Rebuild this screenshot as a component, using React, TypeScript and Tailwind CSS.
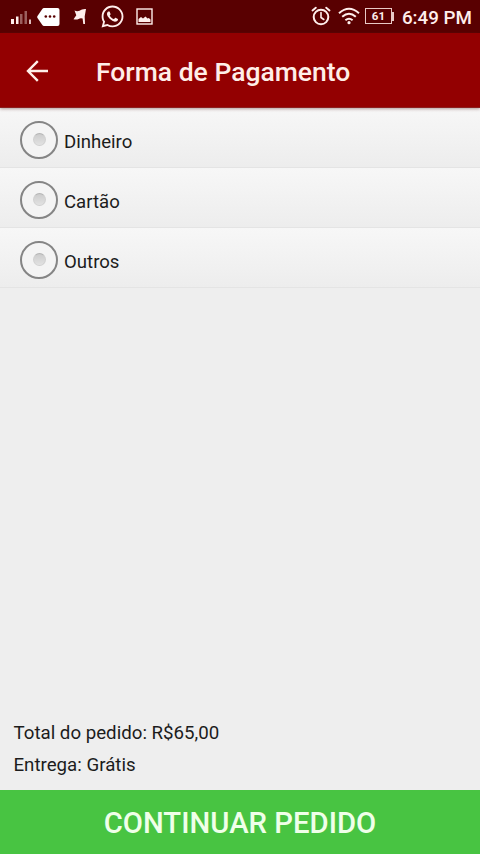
import { FaWhatsapp } from "react-icons/fa";

const paymentMethods = ["Dinheiro", "Cartão", "Outros"];

function StatusBar() {
  return (
    <div className="flex h-[33px] items-center justify-between bg-[#590001] pl-[11px] pr-[8px] text-[#ffeeec]">
      <div className="flex items-center">
        <svg width="21" height="14" viewBox="0 0 21 14" fill="currentColor">
          <rect x="0" y="9" width="3" height="5" />
          <rect x="5" y="6.5" width="2.500" height="7.500" />
          <rect x="9" y="4" width="2.500" height="10" opacity="0.4" />
          <rect x="13.500" y="1" width="2.500" height="13" opacity="0.4" />
          <rect x="18" y="9.500" width="2" height="4.500" opacity="0.8" />
        </svg>
        <svg className="ml-[5px]" width="23" height="18" viewBox="0 0 23 18">
          <path d="M7 0h13.500a2 2 0 0 1 2 2v14a2 2 0 0 1-2 2H7q-1 0-1.700-1L0.500 10q-.6-1 0-2L5.300 1Q6 0 7 0z" fill="#fff" />
          <circle cx="8.800" cy="8.500" r="1.300" fill="#590001" />
          <circle cx="13" cy="8.500" r="1.300" fill="#590001" />
          <circle cx="17.200" cy="8.500" r="1.300" fill="#590001" />
        </svg>
        <svg className="ml-[13px]" width="14" height="17" viewBox="0 0 14 17" fill="currentColor">
          <path d="M1.500 2.500q2.700 1.200 5 .2 2.500-2 6.500-1.700L11.700 8.500 12 16H10.300L9.600 10.500q-2.100-.7-4 .4-2 1.200-5.100.3L3.300 7.300z" />
        </svg>
        <FaWhatsapp className="ml-[13px]" size={25} />
        <svg className="ml-[11px]" width="17" height="17" viewBox="0 0 17 17" fill="none">
          <rect x="1" y="1" width="15" height="15" stroke="currentColor" strokeWidth="1.400" />
          <path d="M2.500 14v-3l2.500-2 2 1.400 2.500-2 2 2.200 1.300-.5 1.700 1.500V14z" fill="currentColor" />
        </svg>
      </div>
      <div className="flex items-center">
        <svg width="20" height="20" viewBox="0 0 20 20" fill="none" stroke="currentColor" strokeLinecap="round">
          <circle cx="10" cy="11" r="7.300" strokeWidth="2" />
          <path d="M10 6.500v5l2.800 2" strokeWidth="1.600" />
          <path d="M1.500 4.500l3.300-2.800M18.500 4.500l-3.300-2.800" strokeWidth="1.900" />
        </svg>
        <svg className="ml-[7px]" width="22" height="18" viewBox="0 0 22 18" fill="none" stroke="currentColor" strokeWidth="2">
          <path d="M1 6.200q10-9 20 0M4.200 9.800q6.800-6 13.600 0M7.400 13.200q3.600-3 7.200 0" />
          <circle cx="11" cy="15.700" r="1.600" fill="currentColor" stroke="none" />
        </svg>
        <div className="ml-[5px] flex items-center">
          <div className="flex h-[16px] w-[27px] items-center justify-center border-[1.500px] border-[#e9c9c6] text-[11.500px] font-bold leading-none">
            61
          </div>
          <div className="h-[9px] w-[2px] bg-[#e9c9c6]" />
        </div>
        <span className="ml-[8px] mt-[3px] whitespace-nowrap text-[18.800px] font-medium leading-none">6:49 PM</span>
      </div>
    </div>
  );
}

function Header() {
  return (
    <header className="z-10 flex h-[75px] items-center border-b border-[#8b2020] bg-[#930001] pl-[26px] text-[#ffeee8] shadow-[0_1px_3px_rgba(90,40,40,0.45)]">
      <svg className="mt-[2px]" width="23" height="22" viewBox="0 0 23 22" fill="none" stroke="currentColor" strokeWidth="2.400">
        <path d="M22 11H2.500M11.800 1.200L2 11l9.800 9.800" />
      </svg>
      <h1 className="ml-[47px] mt-[4px] whitespace-nowrap text-[26.500px] font-medium leading-none">
        Forma de Pagamento
      </h1>
    </header>
  );
}

function PaymentOption({ label }: { label: string }) {
  return (
    <label className="flex h-[60px] items-center border-b border-[#e4e4e4] bg-linear-to-b from-[#f7f7f7] to-[#ededed] pl-[20px]">
      <span className="mt-[4px] flex size-[38px] items-center justify-center rounded-full border-2 border-[#858585] bg-[#f4f4f4]">
        <span className="size-[13px] rounded-full border border-[#d0d0d0] border-t-[#b4b4b4] bg-linear-to-b from-[#cccccc] to-[#e2e2e2]" />
      </span>
      <span className="ml-[6px] mt-[10px] text-[18.600px] leading-none text-[#1c1c1c]">{label}</span>
    </label>
  );
}

export default function App() {
  return (
    <div className="flex h-[854px] w-[480px] flex-col overflow-hidden bg-[#eeeeee] font-['Roboto',sans-serif]">
      <StatusBar />
      <Header />
      <main className="flex-1">
        {paymentMethods.map((label) => (
          <PaymentOption key={label} label={label} />
        ))}
      </main>
      <div className="px-[13.500px] pb-[9px] text-[18.700px] leading-[32px] text-[#1c1c1c]">
        <p>Total do pedido: R$65,00</p>
        <p>Entrega: Grátis</p>
      </div>
      <button className="h-[64px] bg-[#48c442] pt-[4px] text-[29.300px] font-medium leading-none text-[#efffe9]">
        CONTINUAR PEDIDO
      </button>
    </div>
  );
}
